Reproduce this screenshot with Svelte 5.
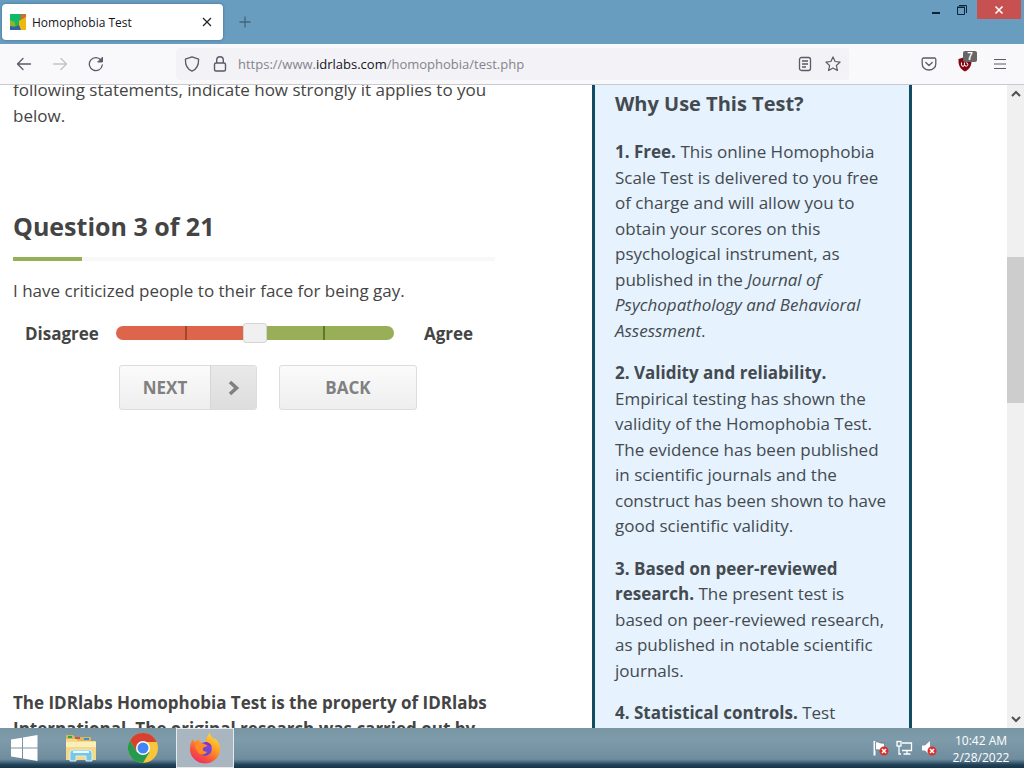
<script>
  let answer = $state(3);
  const question = 3;
  const total = 21;
</script>

<div class="desktop">
  <header class="titlebar">
    <div class="tab">
      <svg class="favicon" viewBox="0 0 16 16" width="16" height="16" aria-hidden="true">
        <rect width="16" height="16" fill="#2fae4e" />
        <path d="M0 0h10l1 7-5 3-6-1z" fill="#10b96a" />
        <path d="M0 6c4 1 6 3 5 6l-5 1z" fill="#8db52d" />
        <path d="M11 0h5v7l-6-2z" fill="#c9703a" />
        <path d="M9 7l7-4v13h-6l-1-3z" fill="#f0b80c" />
        <path d="M0 12l5 1 4-2 2 5H0z" fill="#3760a0" />
      </svg>
      <span class="tab-title">Homophobia Test</span>
      <button class="plain" aria-label="Close tab">
        <svg viewBox="0 0 10 10" width="10" height="10"><path d="M1 1l8 8M9 1L1 9" stroke="#222" stroke-width="1.2" /></svg>
      </button>
    </div>
    <button class="plain new-tab" aria-label="New tab">
      <svg viewBox="0 0 12 12" width="12" height="12"><path d="M6 .5v11M.5 6h11" stroke="#46647c" stroke-width="1.3" /></svg>
    </button>
    <div class="window-controls">
      <button class="plain minimize" aria-label="Minimize">
        <svg viewBox="0 0 10 10" width="10" height="10"><path d="M1 8h8" stroke="#0b2437" stroke-width="2" /></svg>
      </button>
      <button class="plain restore" aria-label="Restore">
        <svg viewBox="0 0 12 12" width="12" height="12" fill="none" stroke="#0b2437"><path d="M1.500 3.500h7v7h-7zM1 3h8" /><path d="M3 1.500h7.500V9" /></svg>
      </button>
      <button class="plain close" aria-label="Close">
        <svg viewBox="0 0 10 10" width="10" height="10"><path d="M1.500 1.500l7 7M8.500 1.500l-7 7" stroke="#fff" stroke-width="1.600" /></svg>
      </button>
    </div>
  </header>

  <nav class="toolbar" aria-label="Browser">
    <div class="history">
      <button class="plain" aria-label="Back">
        <svg viewBox="0 0 16 16" width="16" height="16" fill="none" stroke="#5b5a66" stroke-width="1.3" stroke-linecap="round" stroke-linejoin="round"><path d="M14.500 8H1.500M7 2.500L1.500 8 7 13.500" /></svg>
      </button>
      <button class="plain" aria-label="Forward" disabled>
        <svg viewBox="0 0 16 16" width="16" height="16" fill="none" stroke="#c3c2c9" stroke-width="1.3" stroke-linecap="round" stroke-linejoin="round"><path d="M1.500 8h13M9 2.500L14.500 8 9 13.500" /></svg>
      </button>
      <button class="plain" aria-label="Reload">
        <svg viewBox="0 0 16 16" width="16" height="16" fill="none" stroke="#5b5a66" stroke-width="1.3" stroke-linecap="round"><path d="M13 4.200A6.500 6.500 0 1 0 14.300 9" /><path d="M14.500 1.500V6H10z" fill="#5b5a66" stroke-width="1" stroke-linejoin="round" /></svg>
      </button>
    </div>
    <div class="address">
      <svg viewBox="0 0 16 16" width="16" height="16" fill="none" stroke="#5b5a66" stroke-width="1.3" stroke-linejoin="round" aria-hidden="true"><path d="M8 .8l6.600 2.400c.2 5.400-1.200 9.600-6.600 12C2.600 12.800 1.200 8.600 1.400 3.200z" /></svg>
      <svg viewBox="0 0 16 16" width="16" height="16" fill="none" stroke="#5b5a66" stroke-width="1.4" aria-hidden="true"><rect x="2.500" y="7" width="11" height="8" rx="1.500" /><path d="M4.700 7V4a3.300 3.300 0 0 1 6.600 0v3" /></svg>
      <span class="url">https://www.<b>idrlabs.com</b>/homophobia/test.php</span>
      <button class="plain" aria-label="Reader view">
        <svg viewBox="0 0 16 16" width="16" height="16" fill="none" stroke="#5b5a66" stroke-width="1.300"><rect x="2.500" y="1.500" width="11" height="13" rx="2" /><path d="M5 5h6M5 8h6M5 11h4" /></svg>
      </button>
      <button class="plain" aria-label="Bookmark this page">
        <svg viewBox="0 0 16 16" width="16" height="16" fill="none" stroke="#5b5a66" stroke-width="1.200" stroke-linejoin="round"><path d="M8 .9l2.100 4.600 5 .6-3.700 3.400 1 5L8 12l-4.400 2.500 1-5L.9 6.100l5-.6z" /></svg>
      </button>
    </div>
    <div class="extensions">
      <button class="plain" aria-label="Save to Pocket">
        <svg viewBox="0 0 16 16" width="16" height="16" fill="none" stroke="#5b5a66" stroke-width="1.300" stroke-linecap="round" stroke-linejoin="round"><path d="M2.500 2h11a1.300 1.300 0 0 1 1.300 1.300V8A6.800 6 0 0 1 1.200 8V3.300A1.300 1.300 0 0 1 2.500 2z" /><path d="M4.800 6.500L8 9.500l3.200-3" /></svg>
      </button>
      <button class="plain blocker" aria-label="Ad blocker">
        <svg viewBox="0 0 16 16" width="16" height="16"><path d="M8 1l6.500 2c.3 6-1.300 10-6.500 12.500C2.800 13 1.200 9 1.500 3z" fill="#850714" /><path d="M4.500 6.500v2.300a1.500 1.500 0 0 0 3 0V6.500m0 2.300a1.700 1.700 0 1 0 1.700-2" fill="none" stroke="#fff" /></svg>
        <span class="badge">7</span>
      </button>
      <button class="plain" aria-label="Menu">
        <svg viewBox="0 0 14 12" width="14" height="12"><path d="M1 1.500h12M1 6h12M1 10.500h12" stroke="#5b5a66" stroke-width="1.200" /></svg>
      </button>
    </div>
  </nav>

  <div class="viewport">
    <main class="page">
      <section class="test">
        <p class="intro">following statements, indicate how strongly it applies to you below.</p>
        <h1>Question {question} of {total}</h1>
        <div class="progress"><div class="progress-done" style:width="{(question / total) * 100}%"></div></div>
        <p class="statement">I have criticized people to their face for being gay.</p>
        <div class="scale">
          <label for="answer">Disagree</label>
          <input id="answer" type="range" min="1" max="5" bind:value={answer} />
          <label for="answer">Agree</label>
        </div>
        <div class="actions">
          <button class="action">
            <span class="word">NEXT</span>
            <span class="arrow">
              <svg viewBox="0 0 12 16" width="12" height="16" aria-hidden="true"><path d="M2 2l6.500 6L2 14" fill="none" stroke="#808080" stroke-width="3.600" /></svg>
            </span>
          </button>
          <button class="action"><span class="word">BACK</span></button>
        </div>
        <p class="notice">The IDRlabs Homophobia Test is the property of IDRlabs International. The original research was carried out by</p>
      </section>

      <aside class="why">
        <h2>Why Use This Test?</h2>
        <p><strong>1. Free.</strong> This online Homophobia Scale Test is delivered to you free of charge and will allow you to obtain your scores on this psychological instrument, as published in the <em>Journal of Psychopathology and Behavioral Assessment</em>.</p>
        <p><strong>2. Validity and reliability.</strong> Empirical testing has shown the validity of the Homophobia Test. The evidence has been published in scientific journals and the construct has been shown to have good scientific validity.</p>
        <p><strong>3. Based on peer-reviewed research.</strong> The present test is based on peer-reviewed research, as published in notable scientific journals.</p>
        <p><strong>4. Statistical controls.</strong> Test</p>
      </aside>
    </main>
    <div class="scrollbar">
      <svg viewBox="0 0 10 7" width="10" height="7" aria-hidden="true"><path d="M1 6l4-4 4 4" fill="none" stroke="#505050" stroke-width="2" /></svg>
      <div class="rail"><div class="thumb"></div></div>
      <svg viewBox="0 0 10 7" width="10" height="7" aria-hidden="true"><path d="M1 1l4 4 4-4" fill="none" stroke="#505050" stroke-width="2" /></svg>
    </div>
  </div>

  <footer class="taskbar">
    <button class="plain start" aria-label="Start">
      <svg viewBox="0 0 28 28" width="28" height="28" fill="#fff"><path d="M1 5.500l11-1.800v9.800H1zM13 3.500L27.500 1v12.500H13zM1 14.500h11v9.800l-11-1.800zM13 14.500h14.500V27L13 24.500z" /></svg>
    </button>
    <button class="plain explorer" aria-label="File Explorer">
      <svg viewBox="0 0 34 30" width="34" height="30">
        <path d="M2 3q0-1 1-1h6l2 2h15q1 0 1 1v21H2z" fill="#dcb75a" />
        <path d="M4 3h4v2H4z" fill="#31a354" /><path d="M11 4h5v2h-5z" fill="#d9523b" /><path d="M20 5h5v2h-5z" fill="#3a8fd0" />
        <path d="M2 6h10l2 2h17q1 0 1 1v18H2z" fill="#f3d98a" />
        <path d="M2 9h30v5H2z" fill="#fbeeb8" />
        <path d="M6 28v-8q0-3 3-3h16q3 0 3 3v8h-6v-5H12v5z" fill="#79c5e8" stroke="#d4effa" />
        <path d="M9 19h16" stroke="#e8faff" stroke-width="2" />
      </svg>
    </button>
    <button class="plain chrome" aria-label="Chrome">
      <svg viewBox="0 0 30 30" width="30" height="30">
        <circle cx="15" cy="15" r="15" fill="#f8c63b" />
        <path d="M2 7.500A15 15 0 0 1 28 7.500L28.500 9H15L8.500 18.500z" fill="#d8412f" />
        <path d="M2 7.500A15 15 0 0 0 15 30l6.500-11H8.800z" fill="#259b50" />
        <circle cx="15" cy="15" r="7" fill="#fff" /><circle cx="15" cy="15" r="5.500" fill="#4285f4" />
      </svg>
    </button>
    <button class="plain firefox" aria-label="Firefox">
      <svg viewBox="0 0 32 32" width="32" height="32">
        <defs>
          <linearGradient id="flame" x1=".85" y1="0" x2=".25" y2="1"><stop offset="0" stop-color="#ffe43f" /><stop offset=".4" stop-color="#ffa022" /><stop offset=".75" stop-color="#f9503f" /><stop offset="1" stop-color="#ec2a6c" /></linearGradient>
          <linearGradient id="globe" x1=".8" y1="0" x2=".2" y2="1"><stop offset="0" stop-color="#9a3be6" /><stop offset="1" stop-color="#4a4fc4" /></linearGradient>
        </defs>
        <path d="M4.500 7c0 1.500.6 2.500 1.500 3.300C7 8.500 9 7.500 11 7.300c-.8 1-.9 2-.7 3l6 .7c.5-3.500 1.500-7 4.700-10.500 0 4 3 5 4.500 7.500 0-1 0-1.500-.2-2.300C29 9 31 12.500 31 17a15 14.500 0 0 1-30 0c0-4 1-7.500 3.500-10z" fill="url(#flame)" />
        <circle cx="16" cy="17" r="6.800" fill="url(#globe)" />
        <path d="M6.500 11.500c3-2 6-1 8.500.5l3.500 1.300c-.6 1.700-3.500 1.500-4.300 2.800-1.200 2 .8 4.200 4.300 3.400-2 3.500-6 4-8.800 1.500-2.500-2.300-4-6-3.200-9.500z" fill="#ff8a26" />
        <path d="M15.500 10.200c3-.8 7 1.600 7.500 5.800-1-2-2.500-2.800-3.800-2.800-1.400-.4-2.800-1.400-3.700-3z" fill="#7a2fd0" />
      </svg>
    </button>
    <div class="tray">
      <svg viewBox="0 0 18 16" width="18" height="16" aria-hidden="true">
        <path d="M2.500 1v14.500" stroke="#fff" stroke-width="2" /><path d="M3.500 2c3-1 4 2 9 1v7c-5 1-6-1-9 0z" fill="#fff" stroke="#4a606d" stroke-width=".6" />
        <circle cx="12" cy="11" r="4.500" fill="#d6302f" /><path d="M10 9l4 4m0-4l-4 4" stroke="#fff" stroke-width="1.500" />
      </svg>
      <svg viewBox="0 0 18 16" width="18" height="16" fill="none" stroke="#fff" stroke-width="1.300" aria-hidden="true">
        <path d="M6 3h9.500v7.500H6M11 10.500V14M7.500 14h7M3 6v8h2" /><rect x="1" y="1.500" width="4" height="4.500" />
      </svg>
      <svg viewBox="0 0 18 16" width="18" height="16" aria-hidden="true">
        <path d="M2 5.500h3L10 1v14l-5-4.500H2z" fill="#fff" /><circle cx="12" cy="11" r="4.500" fill="#d6302f" /><path d="M10 9l4 4m0-4l-4 4" stroke="#fff" stroke-width="1.500" />
      </svg>
    </div>
    <div class="clock"><time>10:42 AM</time><time>2/28/2022</time></div>
  </footer>
</div>

<style>
  :global(body) { margin: 0; }
  .desktop {
    height: 100vh;
    display: flex;
    flex-direction: column;
    overflow: hidden;
    font-family: "Open Sans", "Noto Sans", sans-serif;
    color: #444;
    background: #fff;
  }
  .desktop * { box-sizing: border-box; }
  svg { display: block; flex: none; }
  .plain {
    display: flex;
    align-items: center;
    justify-content: center;
    padding: 0;
    border: 0;
    background: none;
  }

  .titlebar { flex: none; display: flex; height: 44px; background: #699dbf; }
  .tab {
    display: flex;
    align-items: center;
    width: 221px;
    height: 36px;
    margin: 4px 0 0 2px;
    padding: 0 11px 0 8px;
    border-radius: 4px;
    background: #fff;
    box-shadow: 0 0 3px #3d6f92;
    color: #15141a;
    font-size: 12px;
  }
  .tab-title { flex: 1; margin-left: 6px; }
  .new-tab { width: 44px; }
  .window-controls { display: flex; margin-left: auto; height: 19px; }
  .minimize, .restore { width: 26px; }
  .minimize { align-items: flex-end; padding-bottom: 4px; }
  .close { width: 44px; margin: 0 3px 0 2px; background: #c75050; }

  .toolbar {
    flex: none;
    display: flex;
    align-items: center;
    height: 41px;
    padding: 0 17px 0 16px;
    border-bottom: 1px solid #c9c9d0;
    background: #f9f9fb;
  }
  .history { display: flex; gap: 20px; width: 160px; }
  .address {
    flex: 1;
    display: flex;
    align-items: center;
    gap: 12px;
    height: 32px;
    padding: 0 8px;
    border-radius: 4px;
    background: #f3f2f6;
  }
  .url { flex: 1; margin-left: -2px; color: #85848c; font-size: 13px; }
  .url b { color: #15141a; font-weight: 400; }
  .extensions { display: flex; align-items: center; gap: 20px; margin-left: 72px; }
  .blocker { position: relative; }
  .badge {
    position: absolute;
    top: -5px;
    right: -4px;
    width: 14px;
    border-radius: 2px;
    background: #666;
    color: #fff;
    font-size: 10px;
    font-weight: 600;
    line-height: 11px;
  }

  .viewport { flex: 1; min-height: 0; display: flex; overflow: hidden; }
  .page {
    flex: 1;
    display: grid;
    grid-template-columns: minmax(0, 1fr) 320px;
    column-gap: 97px;
    padding: 0 95px 0 13px;
    font-size: 17px;
    line-height: 1.5;
  }
  .test { margin-top: -8px; }
  h1, h2, p { margin: 0; }
  h1 { margin-top: 79px; font-size: 25px; line-height: 38px; }
  .progress { height: 4px; margin-top: 12px; background: #f8f8f8; }
  .progress-done { height: 4px; background: #94b054; }
  .statement { margin-top: 17px; }
  .scale {
    display: flex;
    align-items: center;
    margin-top: 17px;
    padding-left: 12px;
    font-weight: 700;
  }
  input[type="range"] {
    appearance: none;
    width: 278px;
    height: 14px;
    margin: 0 30px 0 17px;
    border-radius: 7px;
    background:
      linear-gradient(#a3452f, #a3452f) 25% 0 / 2px 100% no-repeat,
      linear-gradient(#5f7a2c, #5f7a2c) 75% 0 / 2px 100% no-repeat,
      linear-gradient(90deg, #dd654b 50%, #98ae57 50%);
  }
  input[type="range"]::-webkit-slider-thumb {
    appearance: none;
    width: 24px;
    height: 20px;
    border: 1px solid #d4d4d4;
    border-radius: 3px;
    background: #f0f0f0;
  }
  .actions { display: flex; gap: 22px; margin: 19px 0 280px 106px; }
  .action {
    display: flex;
    width: 138px;
    height: 45px;
    padding: 0;
    border: 1px solid #dcdcdc;
    border-radius: 3px;
    background: linear-gradient(#fbfbfb, #eeeeee);
    color: #808080;
    font: 700 17px "Open Sans", sans-serif;
    overflow: hidden;
  }
  .word { flex: 1; align-self: center; }
  .arrow {
    display: flex;
    align-items: center;
    justify-content: center;
    width: 46px;
    height: 100%;
    border-left: 1px solid #d6d6d6;
    background: linear-gradient(#e9e9e9, #dddddd);
  }
  .notice { font-weight: 700; }

  .why {
    padding: 4px 20px 0;
    border: solid #124c63;
    border-width: 0 3px;
    background: #e6f2fd;
    color: #434a50;
  }
  h2 { margin-bottom: 20px; font-size: 20px; line-height: 30px; }
  .why p { margin-bottom: 17px; }

  .scrollbar {
    flex: none;
    display: flex;
    flex-direction: column;
    align-items: center;
    width: 17px;
    padding: 5px 0;
    background: #f0f0f0;
  }
  .rail { flex: 1; width: 100%; padding-top: 160px; }
  .thumb { height: 24%; min-height: 146px; background: #cdcdcd; }

  .taskbar {
    flex: none;
    display: flex;
    height: 40px;
    background: linear-gradient(#7895a3, #7d9baa 30%, #6f8d9e 78%, #1f4157 92%, #14344a);
  }
  .start { width: 48px; }
  .explorer { width: 66px; }
  .chrome, .firefox { width: 58px; }
  .firefox { margin-left: 4px; border: 1px solid #e4eaee; background: #a9b6bf; }
  .tray { display: flex; align-items: center; gap: 6px; margin-left: auto; }
  .clock {
    display: flex;
    flex-direction: column;
    align-items: center;
    width: 86px;
    padding-top: 4px;
    color: #fff;
    font-size: 12px;
    line-height: 17px;
  }
</style>
